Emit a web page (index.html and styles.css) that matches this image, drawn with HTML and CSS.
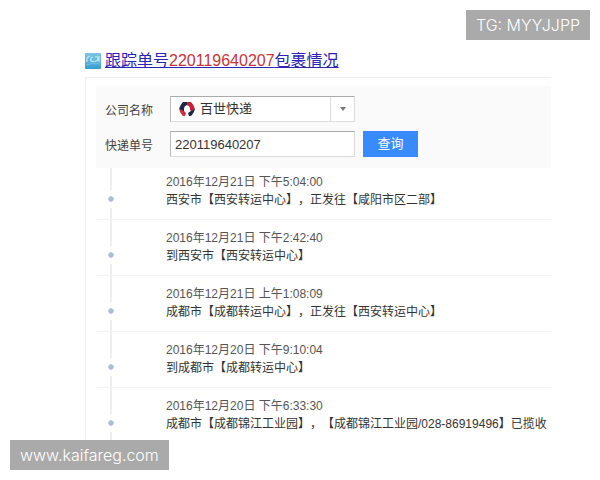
FILE: index.html
```html
<!DOCTYPE html>
<html lang="zh-CN">
<head>
<meta charset="utf-8">
<title>跟踪单号220119640207包裹情况</title>
<link rel="stylesheet" href="styles.css">
</head>
<body>
<main class="page">
  <h1 class="heading">
    <svg class="logo" viewBox="0 0 16 16" aria-hidden="true">
      <defs><linearGradient id="sky" x1="0" y1="0" x2="0" y2="1"><stop offset="0" stop-color="#7cc4e4"/><stop offset=".55" stop-color="#5cb4dc"/><stop offset="1" stop-color="#329ccc"/></linearGradient></defs>
      <rect width="16" height="16" rx="1" fill="url(#sky)"/>
      <path d="M2 9Q1 4 5 3M8 4Q5 5 6 8Q7 9 9 8M10 4Q13 3 13 6Q12 9 9 8M14 3V9" fill="none" stroke="#c5e7f5" stroke-width="1.2"/>
      <path d="M1 12Q8 9 15 11" fill="none" stroke="#74c0e2"/>
    </svg>
    <a class="title" href="#result">跟踪单号<em class="number">220119640207</em>包裹情况</a>
  </h1>
  <section class="card" id="result">
    <form class="search">
      <label class="label" for="company">公司名称</label>
      <div class="picker">
        <svg class="brand" viewBox="0 0 16 16" aria-hidden="true">
          <path d="M4 1H8V4Q5 5 5 8V11L0 8Q1 4 4 1Z" fill="#1d2748"/>
          <path d="M8 1H12Q15 4 16 8L12 11L11 8Q11 5 8 4Z" fill="#c91f32"/>
          <path d="M0 8L5 10L7 12L6 15H4Q1 12 0 8Z" fill="#d52b38"/>
          <path d="M16 8Q15 12 12 15H10L9 12L12 10Z" fill="#1d2748"/>
        </svg>
        <select class="field select" id="company"><option>百世快递</option></select>
        <span class="arrow"><svg viewBox="0 0 8 4" aria-hidden="true"><path d="M1 0H7L4 4Z" fill="#777"/></svg></span>
      </div>
      <label class="label tracking-label" for="tracking">快递单号</label>
      <input class="field" id="tracking" type="text" value="220119640207">
      <button class="submit" type="button">查询</button>
    </form>
    <ol class="timeline">
      <li class="event"><span class="rail"></span><div><time class="time">2016年12月21日 下午5:04:00</time><p class="text">西安市【西安转运中心】，正发往【咸阳市区二部】</p></div></li>
      <li class="event"><span class="rail"></span><div><time class="time">2016年12月21日 下午2:42:40</time><p class="text">到西安市【西安转运中心】</p></div></li>
      <li class="event"><span class="rail"></span><div><time class="time">2016年12月21日 上午1:08:09</time><p class="text">成都市【成都转运中心】，正发往【西安转运中心】</p></div></li>
      <li class="event"><span class="rail"></span><div><time class="time">2016年12月20日 下午9:10:04</time><p class="text">到成都市【成都转运中心】</p></div></li>
      <li class="event"><span class="rail"></span><div><time class="time">2016年12月20日 下午6:33:30</time><p class="text">成都市【成都锦江工业园】，【成都锦江工业园/028-86919496】已揽收</p></div></li>
    </ol>
  </section>
</main>
<div class="tag tag-top">TG: MYYJJPP</div>
<div class="tag tag-bottom">www.kaifareg.com</div>
</body>
</html>
```
FILE: styles.css
```css
* { box-sizing: border-box; }
body {
  margin: 0;
  min-height: 100vh;
  position: relative;
  background: #fff;
  color: #444;
  font: 12px/18px "Liberation Sans", "Noto Sans CJK SC", sans-serif;
  text-spacing-trim: space-all;
}
.page { padding: 48px 49px 40px 85px; }
.heading {
  display: flex;
  align-items: center;
  gap: 4px;
  margin: 0 0 4px;
  font-size: 16px;
  font-weight: 400;
  line-height: 25px;
}
.logo { width: 16px; height: 16px; }
.title { color: #2b22b8; text-decoration: underline; }
.number { color: #c63436; font-style: normal; }
.card {
  padding: 8px 0 0 10px;
  border: solid #eee;
  border-width: 1px 0 0 1px;
}
.search {
  display: grid;
  grid-template-columns: 65px 185px 8px 55px;
  row-gap: 9px;
  align-items: center;
  padding: 10px 0 11px 9px;
  background: #fafafa;
}
.label { padding-top: 3px; }
.tracking-label { grid-column: 1; }
.picker { position: relative; }
.field,
.submit {
  height: 26px;
  border-radius: 0;
  font: 13px/20px "Liberation Sans", "Noto Sans CJK SC", sans-serif;
}
.field {
  display: block;
  width: 100%;
  padding: 0 4px;
  border: 1px solid #ddd;
  border-top-color: #aaa;
  border-left-color: #bbb;
  background: #fff;
  color: #333;
}
.select { appearance: none; padding-left: 29px; }
.submit {
  grid-column: 4;
  padding: 0;
  border: 0;
  background: #388bff;
  color: #fff;
}
.brand { position: absolute; left: 9px; top: 5px; width: 16px; height: 16px; }
.arrow {
  position: absolute;
  top: 1px;
  right: 1px;
  bottom: 1px;
  width: 24px;
  display: flex;
  align-items: center;
  justify-content: center;
  border-left: 1px solid #ddd;
  pointer-events: none;
}
.arrow svg { width: 8px; height: 4px; }
.timeline { margin: 0; padding: 0; list-style: none; }
.event {
  display: grid;
  grid-template-columns: 30px 1fr;
  column-gap: 40px;
  border-bottom: 1px solid #f3f3f3;
}
.event > div { padding: 9px 0 10px; }
.event:first-child > div { padding-top: 5px; }
.event:last-child { border-bottom: 0; }
.event:last-child > div { padding-bottom: 7px; }
.rail {
  display: flex;
  flex-direction: column;
  align-items: center;
  gap: 6px;
}
.rail::before { content: ""; flex: 1; width: 2px; background: #eee; }
.rail::after {
  content: "";
  width: 6px;
  height: 23px;
  background: radial-gradient(circle closest-side, #b0bbd7 80%, transparent) 0 0 / 6px 6px no-repeat, linear-gradient(#eee, #eee) 2px 12px / 2px 12px no-repeat;
}
.event:last-child .rail::after { height: 20px; }
.time, .text { display: block; margin: 0; }
.time { color: #555; }
.text { color: #333; }
.tag {
  position: absolute;
  padding: 3px 10px;
  background: #aaa;
  color: #fff;
  font: 300 16px/24px Inter, sans-serif;
}
.tag-top { top: 10px; right: 10px; }
.tag-bottom { bottom: 10px; left: 10px; }
```
